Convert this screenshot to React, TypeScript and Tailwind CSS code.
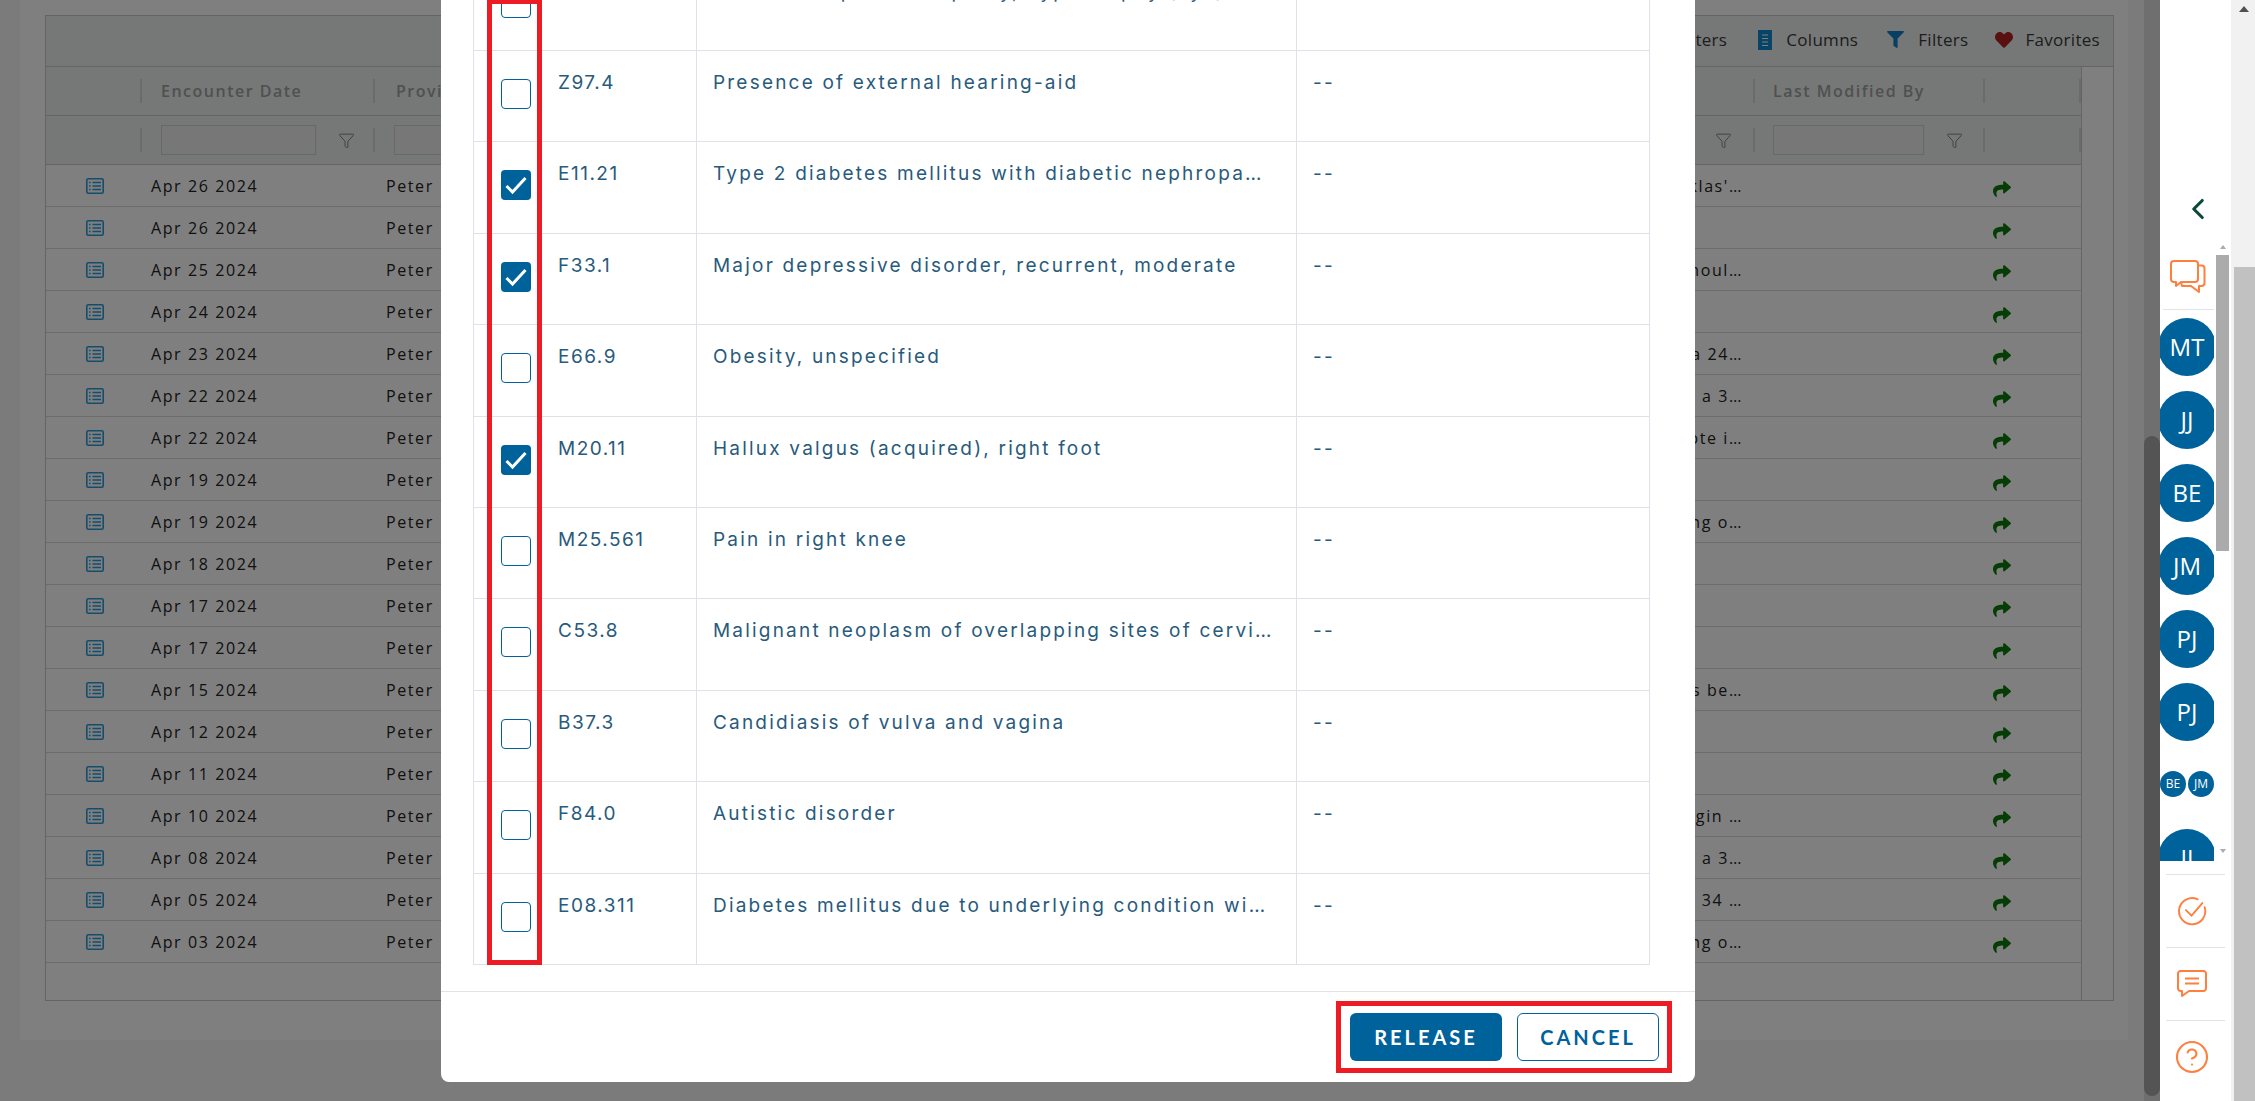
import { ChevronLeft, CircleHelp, Filter } from "lucide-react";
import { FaFilter, FaHeart, FaShare } from "react-icons/fa";

const encounters = [
  { date: "Apr 26 2024", note: "klas'…" },
  { date: "Apr 26 2024", note: "" },
  { date: "Apr 25 2024", note: "houl…" },
  { date: "Apr 24 2024", note: "" },
  { date: "Apr 23 2024", note: "a 24…" },
  { date: "Apr 22 2024", note: "s a 3…" },
  { date: "Apr 22 2024", note: "ote i…" },
  { date: "Apr 19 2024", note: "" },
  { date: "Apr 19 2024", note: "ng o…" },
  { date: "Apr 18 2024", note: "" },
  { date: "Apr 17 2024", note: "" },
  { date: "Apr 17 2024", note: "" },
  { date: "Apr 15 2024", note: "s be…" },
  { date: "Apr 12 2024", note: "" },
  { date: "Apr 11 2024", note: "" },
  { date: "Apr 10 2024", note: "gin …" },
  { date: "Apr 08 2024", note: "s a 3…" },
  { date: "Apr 05 2024", note: "34 …" },
  { date: "Apr 03 2024", note: "ng o…" },
];

const diagnoses = [
  { code: "", name: "Chronic atopic keratopathy, hypertrophy (eye)", checked: false },
  { code: "Z97.4", name: "Presence of external hearing-aid", checked: false },
  { code: "E11.21", name: "Type 2 diabetes mellitus with diabetic nephropa…", checked: true },
  { code: "F33.1", name: "Major depressive disorder, recurrent, moderate", checked: true },
  { code: "E66.9", name: "Obesity, unspecified", checked: false },
  { code: "M20.11", name: "Hallux valgus (acquired), right foot", checked: true },
  { code: "M25.561", name: "Pain in right knee", checked: false },
  { code: "C53.8", name: "Malignant neoplasm of overlapping sites of cervi…", checked: false },
  { code: "B37.3", name: "Candidiasis of vulva and vagina", checked: false },
  { code: "F84.0", name: "Autistic disorder", checked: false },
  { code: "E08.311", name: "Diabetes mellitus due to underlying condition wi…", checked: false },
];

const rowFont = { fontFamily: '"Open Sans", sans-serif' };

function ListIcon() {
  return (
    <svg width="18" height="16" viewBox="0 0 18 16" fill="none" stroke="#2a9ad8" strokeWidth="1.6">
      <rect x="0.8" y="0.8" width="16.4" height="14.4" rx="1.4" />
      <path d="M3 4.500h1.600M3 8h1.600M3 11.500h1.600M6.500 4.500H15M6.500 8H15M6.500 11.500H15" strokeWidth="1.6" />
    </svg>
  );
}

function ColumnsIcon() {
  return (
    <svg width="14" height="20" viewBox="0 0 14 20">
      <rect width="14" height="20" fill="#1088d0" />
      <path d="M4 5h6M4 8.500h6M4 12h6M4 15.500h6" stroke="#fff" strokeWidth="1" />
    </svg>
  );
}

function Separator() {
  return <div className="h-[24px] w-[2px] shrink-0 bg-[#d6d6d6]" />;
}

function FilterCell({ width, inputWidth, inset }: { width: string; inputWidth: string; inset: string }) {
  return (
    <div className={`flex items-center ${width}`}>
      <div className={`h-[30px] border border-[#d0d0d0] bg-[#efefef] ${inset} ${inputWidth}`} />
      <Filter size={17} strokeWidth={1.4} className="ml-[22px] text-[#808080]" />
    </div>
  );
}

function Avatar({ label }: { label: string }) {
  return (
    <div className="w-[58px] h-[58px] shrink-0 rounded-full bg-[#00629b] flex items-center justify-center text-white text-[24px] mb-[15px]" style={rowFont}>
      {label}
    </div>
  );
}

function SmallAvatar({ label }: { label: string }) {
  return (
    <div className="w-[26px] h-[26px] shrink-0 rounded-full bg-[#00629b] flex items-center justify-center text-white text-[12px]" style={rowFont}>
      {label}
    </div>
  );
}

function Checkbox({ checked }: { checked: boolean }) {
  if (checked) {
    return (
      <div className="w-[30px] h-[30px] rounded-[4px] bg-[#00629b] flex items-center justify-center">
        <svg width="24" height="20" viewBox="0 0 24 20" fill="none" stroke="#fff" strokeWidth="3">
          <path d="M2.500 11l6 6L21.500 3" />
        </svg>
      </div>
    );
  }
  return <div className="w-[30px] h-[30px] rounded-[4px] border border-[#00629b] bg-white" />;
}

function EncounterTable() {
  return (
    <div className="border border-[#cbcbcb] h-[986px] flex flex-col" style={rowFont}>
      <div className="h-[51px] shrink-0 border-b border-[#cbcbcb] bg-[#edf0ef] flex items-center justify-end pr-[13px] pb-[3px] text-[17px] tracking-[0.3px] text-[#3a3a3a]">
        <span className="mr-[31px]">Clear Filters</span>
        <ColumnsIcon />
        <span className="ml-[14px] mr-[29px]">Columns</span>
        <FaFilter size={17} className="text-[#1080c8]" />
        <span className="ml-[14px] mr-[27px]">Filters</span>
        <FaHeart size={18} className="text-[#b02020]" />
        <span className="ml-[12px]">Favorites</span>
      </div>
      <div className="flex flex-1 min-h-0">
        <div className="w-[2036px] shrink-0 flex flex-col border-r border-[#cbcbcb]">
          <div className="h-[49px] shrink-0 border-b border-[#cbcbcb] bg-[#edf0ef] flex items-center text-[16px] font-semibold tracking-[1.5px] text-[#a0a0a0]">
            <div className="w-[96px] flex justify-end"><Separator /></div>
            <div className="w-[233px] flex items-center justify-between">
              <span className="ml-[19px]">Encounter Date</span>
              <Separator />
            </div>
            <span className="ml-[21px]">Provider</span>
            <div className="flex-1" />
            <Separator />
            <span className="w-[228px] pl-[18px]">Last Modified By</span>
            <Separator />
            <div className="w-[96px] flex justify-end"><Separator /></div>
          </div>
          <div className="h-[49px] shrink-0 border-b border-[#cbcbcb] bg-[#edf0ef] flex items-center">
            <div className="w-[96px] flex justify-end"><Separator /></div>
            <FilterCell width="w-[231px]" inputWidth="w-[155px]" inset="ml-[19px]" />
            <Separator />
            <div className="h-[30px] ml-[19px] w-[155px] border border-[#d0d0d0] bg-[#efefef]" />
            <div className="flex-1 flex justify-end pr-[21px]">
              <Filter size={17} strokeWidth={1.4} className="text-[#808080]" />
            </div>
            <Separator />
            <FilterCell width="w-[228px]" inputWidth="w-[151px]" inset="ml-[18px]" />
            <Separator />
            <div className="w-[96px] flex justify-end"><Separator /></div>
          </div>
          {encounters.map((row, i) => (
            <div key={i} className="h-[42px] shrink-0 border-b border-[#d9d9d9] flex items-center text-[16px] tracking-[1.6px] text-[#222]">
              <div className="w-[96px] flex justify-center pl-[2px]"><ListIcon /></div>
              <div className="w-[235px] pl-[9px]">{row.date}</div>
              <div className="w-[200px] pl-[9px]">Peter</div>
              <div className="flex-1 text-right">{row.note}</div>
              <div className="w-[241px] shrink-0" />
              <div className="w-[97px] shrink-0 pl-[9px] pt-[7px]"><FaShare size={18} className="text-[#0a7a0a]" /></div>
            </div>
          ))}
        </div>
      </div>
    </div>
  );
}

function ReleaseModal() {
  return (
    <div className="absolute left-[441px] bottom-[19px] w-[1254px] h-[1082px] bg-white rounded-b-lg flex flex-col overflow-hidden">
      <div className="flex-1 min-h-0 flex flex-col justify-end pl-[32px] pr-[45px] pb-[26px] font-['Inter',sans-serif] text-[19px] text-[#285a7c]">
        <div className="relative shrink-0 border-l border-r border-b border-[#dfe1e8]">
          {diagnoses.map((d, i) => (
            <div key={i} className="h-[91.4px] flex border-t border-[#dfe1e8]">
              <div className="w-[68px] shrink-0 pl-[27px] pt-[28px]"><Checkbox checked={d.checked} /></div>
              <div className="w-[155px] shrink-0 pl-[16px] pt-[18px] tracking-[1.5px] border-r border-[#dfe1e8]">{d.code}</div>
              <div className="w-[600px] shrink-0 pl-[16px] pt-[18px] tracking-[2.2px] border-r border-[#dfe1e8]">{d.name}</div>
              <div className="flex-1 pl-[16px] pt-[18px] tracking-[2.2px]">--</div>
            </div>
          ))}
          <div className="absolute left-[13px] w-[55px] top-[40px] bottom-[-1px] border-[5px] border-[#ed1c24]" />
        </div>
      </div>
      <div className="h-[91px] shrink-0 border-t border-[#e2e3e8] flex items-center justify-end pr-[23px]">
        <div className="flex gap-[15px] border-[5px] border-[#ed1c24] pl-[9px] pr-[8px] py-[7px] font-['Lato',sans-serif] font-bold text-[20px] tracking-[3px]">
          <div className="w-[152px] h-[48px] rounded-[6px] bg-[#00629b] text-white flex items-center justify-center">RELEASE</div>
          <div className="w-[142px] h-[48px] rounded-[6px] border border-[#00629b] text-[#00629b] flex items-center justify-center">CANCEL</div>
        </div>
      </div>
    </div>
  );
}

function RailIcon({ children }: { children: React.ReactNode }) {
  return (
    <div className="h-[73px] w-[59px] ml-[6px] pr-[7px] border-t border-[#e3e3e3] flex items-center justify-center">
      {children}
    </div>
  );
}

function RightRail() {
  return (
    <div className="w-[71px] shrink-0 bg-white flex flex-col">
      <div className="h-[245px] shrink-0 flex justify-center pt-[192px] pl-[5px]">
        <ChevronLeft size={34} strokeWidth={2.2} className="text-[#0b4a3a]" />
      </div>
      <div className="h-[616px] shrink-0 flex">
        <div className="w-[54px] overflow-hidden flex flex-col items-center pt-[15px]">
          <svg className="shrink-0 ml-[2px]" width="36" height="34" viewBox="0 0 36 34" fill="none" stroke="#ff7f41" strokeWidth="2" strokeLinejoin="round">
            <path d="M4 1h21a3 3 0 0 1 3 3v15a3 3 0 0 1-3 3H11l-5 4v-4H4a3 3 0 0 1-3-3V4a3 3 0 0 1 3-3z" />
            <path d="M29 5.500h2.500a3 3 0 0 1 3 3V23a3 3 0 0 1-3 3H29v6l-8-6h-9l-1-3.500" />
          </svg>
          <div className="w-[51px] h-[1px] shrink-0 bg-[#e3e3e3] mt-[15px] mb-[8px] ml-[3px]" />
          {["MT", "JJ", "BE", "JM", "PJ", "PJ"].map((label, i) => (
            <Avatar key={i} label={label} />
          ))}
          <div className="flex w-[54px] justify-between shrink-0 mt-[15px] mb-[32px]">
            <SmallAvatar label="BE" />
            <SmallAvatar label="JM" />
          </div>
          <Avatar label="JJ" />
        </div>
        <div className="w-[13px] ml-[2px] flex flex-col items-center">
          <div className="w-0 h-0 border-x-[3px] border-x-transparent border-b-[4px] border-b-[#ababab]" />
          <div className="w-[13px] h-[296px] mt-[6px] bg-[#ababab]" />
          <div className="flex-1" />
          <div className="w-0 h-0 mb-[8px] border-x-[3px] border-x-transparent border-t-[4px] border-t-[#ababab]" />
        </div>
      </div>
      <div className="mt-[13px]">
        <RailIcon>
          <svg width="30" height="30" viewBox="0 0 32 32" fill="none" stroke="#ff7f41" strokeWidth="2" strokeLinecap="round">
            <path d="M22 3.500A14 14 0 1 0 29.500 12" />
            <path d="M9.500 15l6 6L27 7.500" />
          </svg>
        </RailIcon>
        <RailIcon>
          <svg width="30" height="28" viewBox="0 0 30 28" fill="none" stroke="#ff7f41" strokeWidth="2" strokeLinejoin="round">
            <path d="M3.500 1h23a2.500 2.500 0 0 1 2.500 2.500v15a2.500 2.500 0 0 1-2.500 2.500H12l-7 5v-5H3.500A2.500 2.500 0 0 1 1 18.500v-15A2.500 2.500 0 0 1 3.500 1z" />
            <path d="M8 8.500h14M8 13.500h14" />
          </svg>
        </RailIcon>
        <RailIcon>
          <CircleHelp size={36} strokeWidth={1.4} className="text-[#ff7f41]" />
        </RailIcon>
      </div>
    </div>
  );
}

export default function App() {
  return (
    <div className="flex w-[2255px] h-[1101px] overflow-hidden bg-white">
      <div className="relative w-[2160px] shrink-0 flex bg-[#f7f7f7]">
        <div className="w-[2144px] shrink-0 pl-[20px] pr-[16px]">
          <div className="h-[1040px] bg-white pl-[25px] pr-[14px] pt-[15px]">
            <EncounterTable />
          </div>
        </div>
        <div className="w-[16px] shrink-0 bg-[#dedede] pt-[436px]">
          <div className="w-[16px] h-[660px] rounded-full bg-[#a9a9a9]" />
        </div>
        <div className="absolute inset-0 bg-black/50" />
        <ReleaseModal />
      </div>
      <RightRail />
      <div className="w-[24px] shrink-0 bg-[#f1f1f1] flex flex-col items-center">
        <div className="w-0 h-0 mt-[6px] ml-[2px] border-x-[5px] border-x-transparent border-b-[6px] border-b-[#505050]" />
        <div className="w-[21px] ml-[2px] mt-[255px] flex-1 bg-[#c1c1c1]" />
      </div>
    </div>
  );
}
